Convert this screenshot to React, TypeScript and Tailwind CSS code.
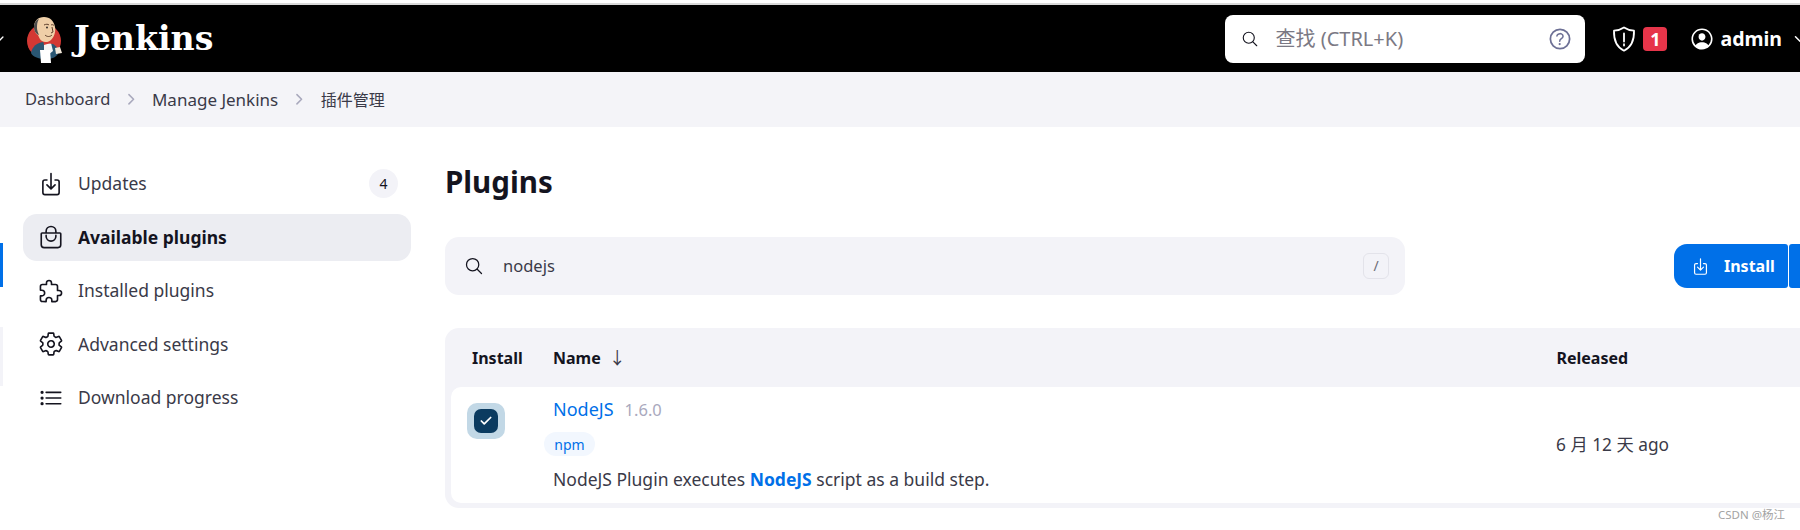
import { ReactNode } from 'react';
import {
  IoBagHandleOutline,
  IoChevronDown,
  IoChevronForward,
  IoDownloadOutline,
  IoExtensionPuzzleOutline,
  IoHelpCircleOutline,
  IoListOutline,
  IoPersonCircleOutline,
  IoSearchOutline,
  IoSettingsOutline,
} from 'react-icons/io5';
import { Check } from 'lucide-react';

const font = "font-['Noto_Sans','Noto_Sans_CJK_SC',sans-serif]";

function JenkinsLogo() {
  return (
    <svg width="38" height="48" viewBox="0 0 38 48" className="shrink-0">
      <circle cx="19" cy="26" r="17" fill="#d33833" />
      {/* suit */}
      <path d="M6 38c1-6 6-11 13-11 6 0 11 2 13 6l1 6c-2 3-6 5-12 5-7 0-13-2-15-6z" fill="#2a5672" />
      <path d="M19 29l7-1 2 8-5 4-4-5z" fill="#f2f2f2" />
      <path d="M18 25l5 2 5-3 1 5-5-.5-5 1.500z" fill="#d33833" />
      {/* head */}
      <path d="M9 12C9 6 13 2 19 2c6 0 10 4 11 10 1 5-1 10-4 13-2 2-6 3-9 1-2-1-3-4-4-6-2-1-4-4-4-8z" fill="#efcfa8" />
      <path d="M9 12c0-4 2-7 5-8-2 3-2 6-2 9 0 2 1 5 2 7-3-1-5-4-5-8z" fill="#4c4c4c" />
      <path d="M19 10c2-1 4-1 5 0M26 10c1-.5 2-.5 3 .5M27 12l1 5-2 1M20 20c2 2 5 2 7 0" stroke="#5c3d2a" strokeWidth="1" fill="none" />
      <circle cx="22" cy="12.500" r="0.9" fill="#231f20" />
      {/* towel and hand */}
      <path d="M15 35h10l1 13H16z" fill="#fff" />
      <path d="M30 33l5-1 2 6-6 1z" fill="#efe6d8" />
    </svg>
  );
}

function ShieldIcon() {
  return (
    <svg width="24" height="26" viewBox="0 0 24 26" fill="none" stroke="#fff" strokeWidth="1.8">
      <path d="M12 1.500c3 2 6.500 3 10 3.200.3 8.500-2 16-10 20-8-4-10.300-11.500-10-20 3.500-.2 7-1.200 10-3.200z" strokeLinejoin="round" />
      <path d="M12 7.500v8M12 18.200v1.300" strokeLinecap="round" />
    </svg>
  );
}

function NavItem({ icon, label, active, badge }: { icon: ReactNode; label: string; active?: boolean; badge?: string }) {
  return (
    <div className={`flex h-[47px] items-center rounded-[14px] pl-[15px] pr-[13px] ${active ? 'bg-[#ecedf2] font-bold text-[#14141f]' : 'text-[#3a3a48]'}`}>
      <span className="mr-[14px] text-[#14141f]">{icon}</span>
      <span className="text-[17.5px]">{label}</span>
      {badge && (
        <span className="ml-auto flex size-[29px] items-center justify-center rounded-full bg-[#f3f3f8] text-sm text-[#14141f]">{badge}</span>
      )}
    </div>
  );
}

export default function App() {
  return (
    <div className={`relative h-[530px] w-[1800px] overflow-hidden bg-white ${font}`}>
      {/* top edge of the capture */}
      <div className="mt-[3px] h-[2px] bg-[#d9d9d9]" />

      <header className="flex h-[67px] items-center bg-black text-white">
        <IoChevronDown className="-ml-2 mr-[19px] text-sm" />
        <JenkinsLogo />
        <span className="ml-[11px] font-['DejaVu_Serif',serif] text-[33.2px] font-bold">Jenkins</span>

        <div className="ml-auto flex h-[48px] w-[360px] items-center rounded-lg bg-white pl-4 pr-[11px] text-[#7b7984]">
          <IoSearchOutline className="mr-4 text-lg text-[#14141f]" />
          <span className="text-[20px]">查找 (CTRL+K)</span>
          <IoHelpCircleOutline className="ml-auto text-[28px] text-[#6d7095]" />
        </div>

        <div className="ml-[27px] flex items-center">
          <ShieldIcon />
          <span className="ml-[7px] flex h-[24px] w-[24px] items-center justify-center rounded bg-[#e6354a] text-lg font-bold">1</span>
        </div>
        <IoPersonCircleOutline className="ml-[22px] text-[26px]" />
        <span className="ml-[5px] text-[19.5px] font-bold">admin</span>
        <IoChevronDown className="ml-[10px] -mr-2 shrink-0 text-base" />
      </header>

      <nav className="flex h-[55px] items-center bg-[#f4f4f8] pl-[25px] text-[16.5px] text-[#3a3a48]">
        <span>Dashboard</span>
        <IoChevronForward className="ml-[13px] mr-3 text-[#a9a9bd]" />
        <span className="text-[17px]">Manage Jenkins</span>
        <IoChevronForward className="mx-[13px] text-[#a9a9bd]" />
        <span className="text-[16px]">插件管理</span>
      </nav>

      <div className="flex pl-[23px]">
        <aside className="mt-[33px] flex w-[388px] shrink-0 flex-col gap-[6.5px]">
          <NavItem icon={<IoDownloadOutline className="text-[26px]" />} label="Updates" badge="4" />
          <NavItem icon={<IoBagHandleOutline className="text-[26px]" />} label="Available plugins" active />
          <NavItem icon={<IoExtensionPuzzleOutline className="text-[26px]" />} label="Installed plugins" />
          <NavItem icon={<IoSettingsOutline className="text-[26px]" />} label="Advanced settings" />
          <NavItem icon={<IoListOutline className="text-[26px]" />} label="Download progress" />
        </aside>

        <main className="ml-[34px] w-[1355px] shrink-0">
          <h1 className="mt-[34px] text-[29.5px] leading-[42px] font-bold text-[#14141f]">Plugins</h1>

          <div className="mt-[34px] flex items-center">
            <div className="flex h-[58px] w-[960px] shrink-0 items-center rounded-[14px] bg-[#f3f3f8] pl-[19px] pr-4">
              <IoSearchOutline className="mr-[19px] text-[20px] text-[#14141f]" />
              <span className="text-[16.5px] text-[#3a3a48]">nodejs</span>
              <span className="ml-auto flex size-[26px] items-center justify-center rounded-md border border-[#e3e3ea] text-sm text-[#6d6b76]">/</span>
            </div>
            <div className="ml-[269px] flex h-[44px] shrink-0 text-white">
              <div className="flex w-[114px] items-center rounded-l-[13px] rounded-r-[3px] bg-[#0070e8] pl-[17px] text-[16px] font-bold">
                <IoDownloadOutline className="mr-[14px] text-[19px]" />
                Install
              </div>
              <div className="ml-px w-[14px] rounded-l-[3px] bg-[#0070e8]" />
            </div>
          </div>

          <div className="mt-[33px] rounded-l-[14px] bg-[#f3f3f8] pb-[5px] pl-[6px]">
            <div className="grid h-[59px] grid-cols-[81px_1003.5px_1fr] items-center pl-[21px] text-[16px] font-bold text-[#14141f]">
              <span>Install</span>
              <span className="flex items-center">
                Name
                <span className="ml-2 text-[17px] leading-none font-normal text-[#3a3a48]">↓</span>
              </span>
              <span>Released</span>
            </div>
            <div className="grid h-[116px] grid-cols-[86px_1005px_1fr] rounded-l-[10px] bg-white pl-[16px] text-[#3a3a48]">
              <div className="pt-[16px]">
                <div className="flex h-[36px] w-[38px] items-center justify-center rounded-[10px] bg-[#c2d8e6]">
                  <div className="flex h-[24px] w-[24px] items-center justify-center rounded-[7px] bg-[#0b3b60]">
                    <Check className="size-[14px] text-white" strokeWidth={3} />
                  </div>
                </div>
              </div>
              <div className="pt-[9px]">
                <div className="flex items-baseline leading-[27px]">
                  <span className="text-[18px] text-[#0070e8]">NodeJS</span>
                  <span className="ml-[11px] text-[16.5px] text-[#a9a9bd]">1.6.0</span>
                </div>
                <span className="mt-[9px] -ml-[9px] flex h-[24px] w-[51px] items-center justify-center rounded-full bg-[#f2f7fe] text-[14px] text-[#0070e8]">npm</span>
                <p className="mt-[11px] text-[17.5px] leading-[24px]">
                  NodeJS Plugin executes <b className="text-[#0070e8]">NodeJS</b> script as a build step.
                </p>
              </div>
              <div className="-ml-[2px] flex items-center text-[17.3px]">6 月 12 天 ago</div>
            </div>
          </div>
        </main>
      </div>

      {/* clipped bits of the collapsed panel at the window's edge */}
      <div className="absolute top-[243px] left-0 h-[44px] w-[3px] bg-[#0070e8]" />
      <div className="absolute top-[327px] left-0 h-[59px] w-[3px] bg-[#f3f3f8]" />
      <span className="absolute right-[15px] bottom-[7px] text-[11.5px] text-[#a3a3a3]">CSDN @杨江</span>
    </div>
  );
}
